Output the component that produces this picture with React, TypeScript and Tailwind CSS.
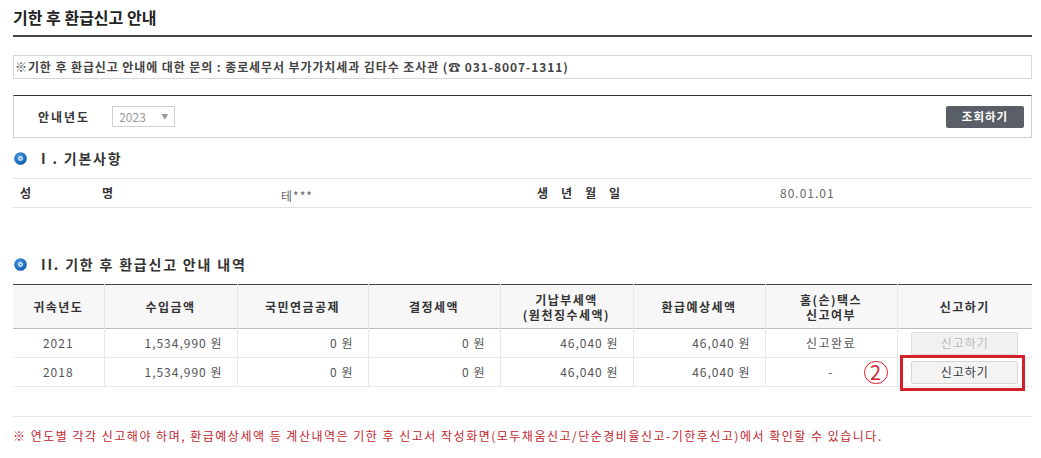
import React from 'react';

const FONT = { fontFamily: '"Noto Sans CJK KR", "Noto Sans", sans-serif' };

// ==========================================
// DATA
// ==========================================
const ROWS = [
  { year: "2021", income: "1,534,990 원", pension: "0 원", tax: "0 원", paid: "46,040 원", refund: "46,040 원", status: "신고완료", done: true },
  { year: "2018", income: "1,534,990 원", pension: "0 원", tax: "0 원", paid: "46,040 원", refund: "46,040 원", status: "-", done: false },
];

function SectionIcon() {
  return (
    <svg width="13" height="13" viewBox="0 0 13 13" className="shrink-0">
      <defs>
        <radialGradient id="sg" cx="40%" cy="35%" r="70%">
          <stop offset="0%" stopColor="#4a9be8" />
          <stop offset="100%" stopColor="#0b5aa8" />
        </radialGradient>
      </defs>
      <circle cx="6.5" cy="6.5" r="6.3" fill="url(#sg)" />
      <circle cx="6.5" cy="6.5" r="2.4" fill="#dcecff" />
      <path d="M5.9 5.3 L7.5 6.5 L5.9 7.7 Z" fill="#1b6cc0" />
    </svg>
  );
}

function SectionTitle({ children }: { children: React.ReactNode }) {
  return (
    <div className="flex items-center gap-[14px] pl-[1px]">
      <SectionIcon />
      <h2 className="text-[14px] font-bold text-[#333] tracking-[1.8px] leading-[18px]">{children}</h2>
    </div>
  );
}

const TH = "font-bold text-[#333] border-l border-[#e8e8e8] tracking-[1.5px]";
const TD = "text-right pr-[14px] border-l border-[#e8e8e8]";

export default function App() {
  return (
    <div style={FONT} className="w-[1041px] h-[458px] bg-white px-[13px] pt-[6px] text-[#333] overflow-hidden">
      <h1 className="text-[16px] font-bold text-[#222] leading-[22px]">기한 후 환급신고 안내</h1>
      <div className="mt-[7px] h-[2px] w-[1019px] bg-[#444]" />

      {/* Inquiry */}
      <div className="mt-[18px] w-[1019px] h-[24px] border border-[#d8d8d8] flex items-center px-[1px]">
        <p className="text-[12px] font-semibold text-[#444] tracking-[0.9px]">
          ※기한 후 환급신고 안내에 대한 문의 : 종로세무서 부가가치세과 김타수 조사관 (☎ 031-8007-1311)
        </p>
      </div>

      {/* Search */}
      <div className="mt-[16px] w-[1019px] h-[43px] border-t-[1.5px] border-t-[#333] border-x border-b border-[#cfcfcf] flex items-center justify-between pl-[24px] pr-[7px]">
        <div className="flex items-center gap-[22px]">
          <span className="text-[12px] font-bold text-[#333] tracking-[2px]">안내년도</span>
          <div className="w-[63px] h-[21px] border border-[#cfcfcf] flex items-center justify-between px-[6px]">
            <span className="text-[12px] text-[#999]">2023</span>
            <span className="text-[7px] text-[#999]">▼</span>
          </div>
        </div>
        <button className="w-[78px] h-[22px] rounded-[2px] bg-[#5a5f67] text-white text-[11.5px] font-bold tracking-[1px]">조회하기</button>
      </div>

      {/* Section I */}
      <div className="mt-[11px]">
        <SectionTitle>I . 기본사항</SectionTitle>
      </div>
      <div className="mt-[11px] w-[1019px] h-[30px] border-y border-[#e2e2e2] flex text-[12px]">
        <div className="w-[257px] shrink-0 flex items-center pl-[7px]">
          <div className="w-[93px] flex justify-between font-bold text-[#333]"><span>성</span><span>명</span></div>
        </div>
        <div className="w-[255px] shrink-0 flex items-center pt-[5px] pl-[11px] text-[#666] tracking-[1px]">테***</div>
        <div className="w-[240px] shrink-0 flex items-center pl-[12px]">
          <span className="font-bold text-[#333] tracking-[13px]">생년월일</span>
        </div>
        <div className="flex-1 flex items-center pl-[15px] text-[#666] tracking-[1px]">80.01.01</div>
      </div>

      {/* Section II */}
      <div className="mt-[47px]">
        <SectionTitle>II. 기한 후 환급신고 안내 내역</SectionTitle>
      </div>
      <table className="mt-[11px] w-[1019px] border-collapse text-[12px] table-fixed">
        <colgroup>
          <col className="w-[91px]" />
          <col className="w-[133px]" />
          <col className="w-[131px]" />
          <col className="w-[132px]" />
          <col className="w-[133px]" />
          <col className="w-[132px]" />
          <col className="w-[132px]" />
          <col className="w-[135px]" />
        </colgroup>
        <thead>
          <tr className="h-[44px] bg-[#f7f7f7] border-t border-t-[#444] border-b border-b-[#bdbdbd]">
            <th className="font-bold text-[#333] tracking-[1.5px]">귀속년도</th>
            <th className={TH}>수입금액</th>
            <th className={TH}>국민연금공제</th>
            <th className={TH}>결정세액</th>
            <th className={`${TH} leading-[15px]`}>기납부세액<br />(원천징수세액)</th>
            <th className={TH}>환급예상세액</th>
            <th className={`${TH} leading-[15px]`}>홈(손)택스<br />신고여부</th>
            <th className={TH}>신고하기</th>
          </tr>
        </thead>
        <tbody>
          {ROWS.map(r => (
            <tr key={r.year} className="h-[29px] border-b border-[#e8e8e8] text-[#555] tracking-[1px]">
              <td className="text-center">{r.year}</td>
              <td className={TD}>{r.income}</td>
              <td className={TD}>{r.pension}</td>
              <td className={TD}>{r.tax}</td>
              <td className={TD}>{r.paid}</td>
              <td className={TD}>{r.refund}</td>
              <td className="text-center border-l border-[#e8e8e8] tracking-[1.5px]">{r.status}</td>
              <td className="border-l border-[#e8e8e8] relative">
                <div className="flex justify-center">
                  {r.done ? (
                    <button disabled className="w-[107px] h-[23px] bg-[#f1f1f1] border border-[#dcdcdc] rounded-[2px] text-[#bbb] tracking-[1px]">신고하기</button>
                  ) : (
                    <button className="w-[107px] h-[23px] bg-[#f3f3f3] border border-[#d6d6d6] rounded-[2px] text-[#333] tracking-[1px]">신고하기</button>
                  )}
                </div>
                {!r.done && (
                  <>
                    <div className="absolute left-[2px] top-[-3px] w-[125px] h-[36px] border-[3px] border-[#d4202a] pointer-events-none" />
                    <span className="absolute left-[-34px] top-[3px] w-[24px] h-[23px] rounded-full border-[1.5px] border-[#d4202a] text-[#d4202a] text-[20px] leading-[20px] text-center tracking-normal">2</span>
                  </>
                )}
              </td>
            </tr>
          ))}
        </tbody>
      </table>

      <div className="mt-[29px] w-[1019px] h-px bg-[#e6e6e6]" />
      <p className="mt-[10px] text-[12px] text-[#c0282e] tracking-[1.5px]">
        ※ 연도별 각각 신고해야 하며, 환급예상세액 등 계산내역은 기한 후 신고서 작성화면(모두채움신고/단순경비율신고-기한후신고)에서 확인할 수 있습니다.
      </p>
    </div>
  );
}
